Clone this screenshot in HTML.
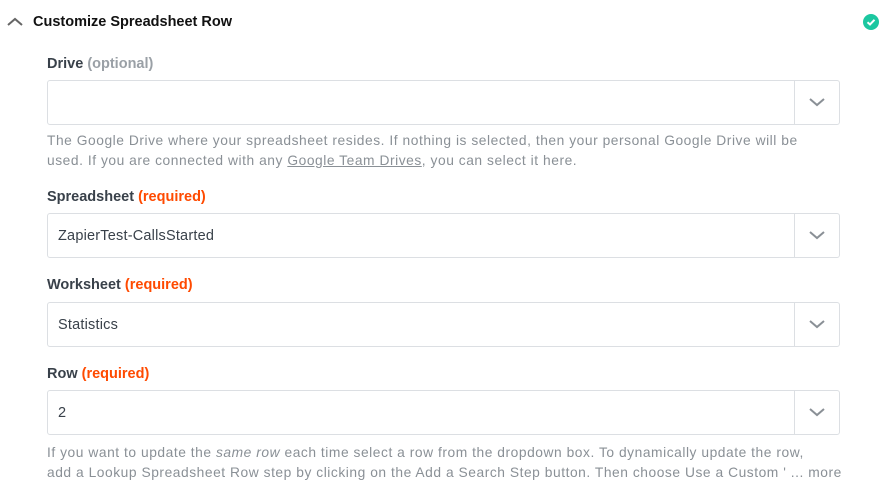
<!DOCTYPE html>
<html><head><style>
body{margin:0;width:886px;height:493px;background:#fff;font-family:"Liberation Sans",sans-serif;position:relative;overflow:hidden}
.t{position:absolute;white-space:nowrap}
.title{left:33px;top:14px;font-size:14.5px;font-weight:bold;color:#111}
.lbl{left:47px;font-size:14.5px;font-weight:bold;color:#39414a}
.opt{color:#9aa0a6}
.req{color:#ff4a00}
.box{position:absolute;left:47px;width:791px;height:43px;border:1px solid #dcdfe3;border-radius:3px}
.box .v{position:absolute;left:10px;top:14px;font-size:14.5px;color:#39414a;letter-spacing:0.2px}
.box .d{position:absolute;right:0;top:0;width:44px;height:43px;border-left:1px solid #dcdfe3}
.box svg{position:absolute;left:14px;top:16px}
.help{left:47px;font-size:13.8px;color:#8a9096;line-height:20px;letter-spacing:0.54px}
</style></head><body>
<svg style="position:absolute;left:7px;top:17px" width="16" height="10"><path d="M1 8 L8 2 L15 8" fill="none" stroke="#666" stroke-width="2"/></svg>
<div class="t title">Customize Spreadsheet Row</div>
<svg style="position:absolute;left:863px;top:14px" width="16" height="16"><circle cx="8" cy="8" r="8" fill="#1cc7a0"/><path d="M4.5 8.3 L7 10.5 L11.5 5.8" fill="none" stroke="#fff" stroke-width="2"/></svg>

<div class="t lbl" style="top:56px">Drive <span class="opt">(optional)</span></div>
<div class="box" style="top:80px"><div class="d"><svg width="16" height="10"><path d="M1 2 L8 8 L15 2" fill="none" stroke="#8a9096" stroke-width="2"/></svg></div></div>
<div class="t help" style="top:131px">The Google Drive where your spreadsheet resides. If nothing is selected, then your personal Google Drive will be<br>used. If you are connected with any <u>Google Team Drives</u>, you can select it here.</div>

<div class="t lbl" style="top:189px">Spreadsheet <span class="req">(required)</span></div>
<div class="box" style="top:213px"><div class="v">ZapierTest-CallsStarted</div><div class="d"><svg width="16" height="10"><path d="M1 2 L8 8 L15 2" fill="none" stroke="#8a9096" stroke-width="2"/></svg></div></div>

<div class="t lbl" style="top:277px">Worksheet <span class="req">(required)</span></div>
<div class="box" style="top:302px"><div class="v">Statistics</div><div class="d"><svg width="16" height="10"><path d="M1 2 L8 8 L15 2" fill="none" stroke="#8a9096" stroke-width="2"/></svg></div></div>

<div class="t lbl" style="top:366px">Row <span class="req">(required)</span></div>
<div class="box" style="top:390px"><div class="v">2</div><div class="d"><svg width="16" height="10"><path d="M1 2 L8 8 L15 2" fill="none" stroke="#8a9096" stroke-width="2"/></svg></div></div>
<div class="t help" style="top:443px">If you want to update the <i>same row</i> each time select a row from the dropdown box. To dynamically update the row,<br>add a Lookup Spreadsheet Row step by clicking on the Add a Search Step button. Then choose Use a Custom ' ... more</div>
</body></html>
